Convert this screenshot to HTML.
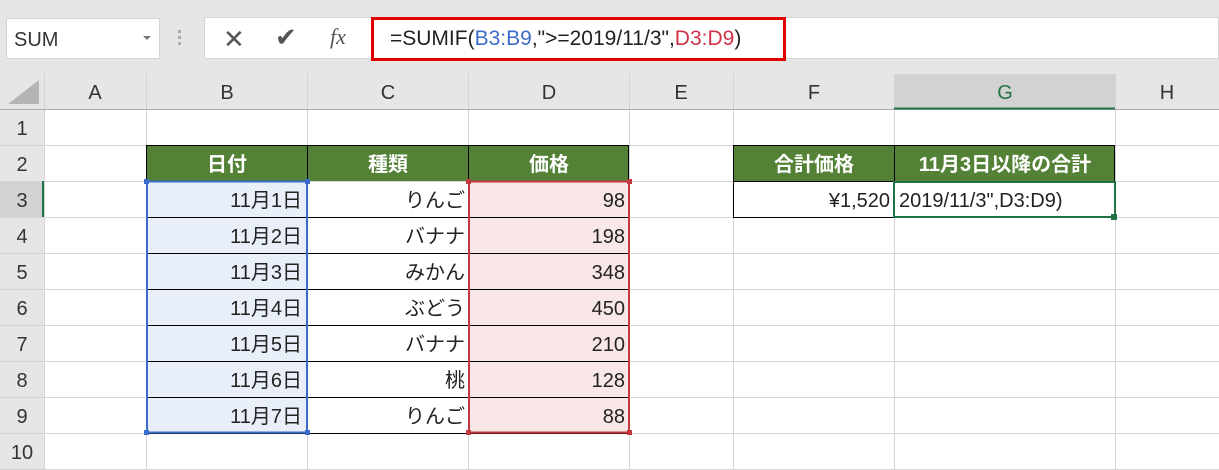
<!DOCTYPE html><html><head><meta charset="utf-8"><style>
body{margin:0;width:1219px;height:470px;overflow:hidden;background:#fff;font-family:"Liberation Sans","Noto Sans CJK JP",sans-serif;position:relative}
.a{position:absolute;box-sizing:border-box}
.t{font-size:20px;color:#222;white-space:nowrap}
</style></head><body>
<div class="a" style="left:0;top:0;width:1219px;height:74px;background:#e6e6e6"></div>
<div class="a" style="left:6px;top:18px;width:154px;height:41px;background:#fff;border:1px solid #d4d4d4"></div>
<div class="a t" style="left:14px;top:29px;color:#333">SUM</div>
<div class="a" style="left:143px;top:36px;border:4px solid transparent;border-top:4px solid #777"></div>
<div class="a" style="left:178px;top:30px;width:3px;height:18px;background:repeating-linear-gradient(#aaa 0 3px,transparent 3px 6px)"></div>
<div class="a" style="left:204px;top:17px;width:1015px;height:42px;background:#fff;border:1px solid #d4d4d4"></div>
<div class="a" style="left:223px;top:24px;font-size:26px;color:#555">✕</div>
<div class="a" style="left:275px;top:22px;font-size:26px;color:#555">✔</div>
<div class="a" style="left:330px;top:24px;font-size:22px;color:#555;font-family:'Liberation Serif',serif;font-style:italic">fx</div>
<div class="a" style="left:371px;top:17px;width:415px;height:44px;border:3px solid #e00000"></div>
<div class="a t" style="left:390px;top:27px;font-size:21px">=SUMIF(<span style="color:#3c6cc9">B3:B9</span>,"&gt;=2019/11/3",<span style="color:#d0324a">D3:D9</span>)</div>
<svg class="a" style="left:0;top:74px" width="1219" height="396">
<rect x="0" y="0" width="1219" height="35" fill="#e6e6e6"/>
<rect x="0" y="35" width="44" height="361" fill="#e6e6e6"/>
<rect x="894" y="0" width="221" height="35" fill="#d2d2d2"/>
<rect x="0" y="107" width="44" height="36" fill="#d2d2d2"/>
<polygon points="8,30 39,30 39,6" fill="#b4b4b4"/>
<g stroke="#d4d4d4" stroke-width="1">
<line x1="44.5" y1="0" x2="44.5" y2="396"/><line x1="146.5" y1="0" x2="146.5" y2="396"/><line x1="307.5" y1="0" x2="307.5" y2="396"/><line x1="468.5" y1="0" x2="468.5" y2="396"/><line x1="629.5" y1="0" x2="629.5" y2="396"/><line x1="733.5" y1="0" x2="733.5" y2="396"/><line x1="894.5" y1="0" x2="894.5" y2="396"/><line x1="1115.5" y1="0" x2="1115.5" y2="396"/>
<line x1="0" y1="71.5" x2="1219" y2="71.5"/><line x1="0" y1="107.5" x2="1219" y2="107.5"/><line x1="0" y1="143.5" x2="1219" y2="143.5"/><line x1="0" y1="179.5" x2="1219" y2="179.5"/><line x1="0" y1="215.5" x2="1219" y2="215.5"/><line x1="0" y1="251.5" x2="1219" y2="251.5"/><line x1="0" y1="287.5" x2="1219" y2="287.5"/><line x1="0" y1="323.5" x2="1219" y2="323.5"/><line x1="0" y1="359.5" x2="1219" y2="359.5"/><line x1="0" y1="395.5" x2="1219" y2="395.5"/>
</g>
<line x1="0" y1="35.5" x2="1219" y2="35.5" stroke="#ababab"/>
<line x1="894" y1="34.5" x2="1115" y2="34.5" stroke="#217346" stroke-width="2"/>
<line x1="43" y1="107" x2="43" y2="143" stroke="#217346" stroke-width="2"/>
<rect x="146" y="71" width="483" height="36" fill="#538135"/>
<rect x="733" y="71" width="382" height="36" fill="#538135"/>
<rect x="147" y="107" width="160" height="252" fill="#e8eff8"/>
<rect x="469" y="107" width="160" height="252" fill="#f9e7e8"/>
<g stroke="#000" stroke-width="1" fill="none">
<rect x="146.5" y="71.5" width="482" height="288"/>
<line x1="307.5" y1="71" x2="307.5" y2="107"/><line x1="468.5" y1="71" x2="468.5" y2="107"/>
<line x1="146" y1="143.5" x2="629" y2="143.5"/><line x1="146" y1="179.5" x2="629" y2="179.5"/><line x1="146" y1="215.5" x2="629" y2="215.5"/><line x1="146" y1="251.5" x2="629" y2="251.5"/><line x1="146" y1="287.5" x2="629" y2="287.5"/><line x1="146" y1="323.5" x2="629" y2="323.5"/>
<rect x="733.5" y="71.5" width="381" height="72"/><line x1="894.5" y1="71" x2="894.5" y2="143"/><line x1="733" y1="107.5" x2="1115" y2="107.5"/>
</g>
<rect x="147" y="107.5" width="160" height="251" fill="none" stroke="#3c6cc9" stroke-width="2"/>
<rect x="469" y="107.5" width="160" height="251" fill="none" stroke="#c0393e" stroke-width="2"/>
<g fill="#3c6cc9"><rect x="144" y="105" width="5" height="5"/><rect x="305" y="105" width="5" height="5"/><rect x="144" y="356" width="5" height="5"/><rect x="305" y="356" width="5" height="5"/></g>
<g fill="#c0393e"><rect x="466" y="105" width="5" height="5"/><rect x="627" y="105" width="5" height="5"/><rect x="466" y="356" width="5" height="5"/><rect x="627" y="356" width="5" height="5"/></g>
<rect x="894" y="108" width="221" height="35" fill="none" stroke="#217346" stroke-width="2"/>
<rect x="1111" y="140" width="6" height="6" fill="#217346"/>
<g font-size="20" fill="#333" text-anchor="middle" font-family="Liberation Sans,sans-serif">
<text x="95" y="25">A</text><text x="227" y="25">B</text><text x="388" y="25">C</text><text x="549" y="25">D</text><text x="681" y="25">E</text><text x="814" y="25">F</text><text x="1005" y="25" fill="#217346">G</text><text x="1167" y="25">H</text>
<text x="22" y="61">1</text><text x="22" y="97">2</text><text x="22" y="133">3</text><text x="22" y="169">4</text><text x="22" y="205">5</text><text x="22" y="241">6</text><text x="22" y="277">7</text><text x="22" y="313">8</text><text x="22" y="349">9</text><text x="22" y="385">10</text>
</g>
<g font-size="20" fill="#fff" font-weight="bold" text-anchor="middle" font-family="Liberation Sans,Noto Sans CJK JP,sans-serif">
<text x="227" y="97">日付</text><text x="388" y="97">種類</text><text x="549" y="97">価格</text><text x="814" y="97">合計価格</text><text x="1005" y="97">11月3日以降の合計</text>
</g>
<g font-size="20" fill="#222" text-anchor="end" font-family="Liberation Sans,Noto Sans CJK JP,sans-serif">
<text x="302" y="133">11月1日</text><text x="302" y="169">11月2日</text><text x="302" y="205">11月3日</text><text x="302" y="241">11月4日</text><text x="302" y="277">11月5日</text><text x="302" y="313">11月6日</text><text x="302" y="349">11月7日</text>
<text x="465" y="133">りんご</text><text x="465" y="169">バナナ</text><text x="465" y="205">みかん</text><text x="465" y="241">ぶどう</text><text x="465" y="277">バナナ</text><text x="465" y="313">桃</text><text x="465" y="349">りんご</text>
<text x="625" y="133">98</text><text x="625" y="169">198</text><text x="625" y="205">348</text><text x="625" y="241">450</text><text x="625" y="277">210</text><text x="625" y="313">128</text><text x="625" y="349">88</text>
<text x="890" y="133">¥1,520</text>
<text x="899" y="133" text-anchor="start">2019/11/3",D3:D9)</text>
</g>
</svg>
</body></html>
